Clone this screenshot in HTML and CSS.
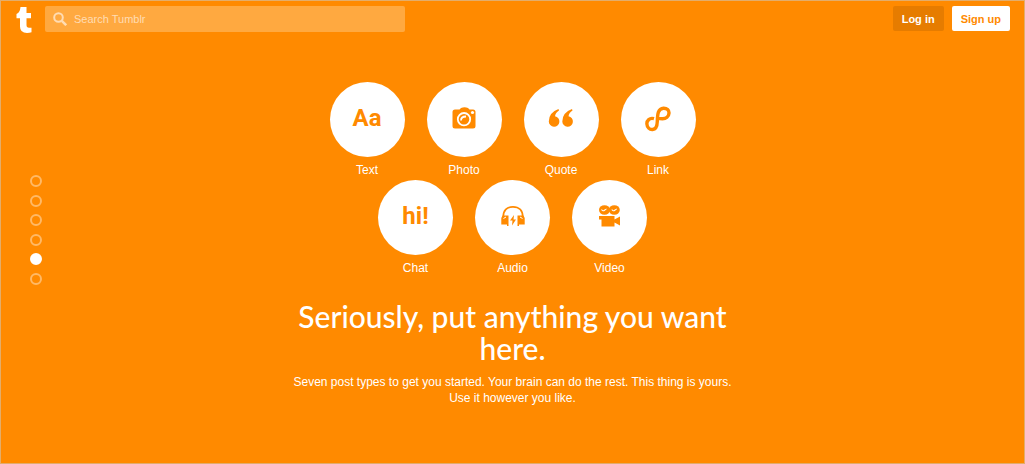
FILE: index.html
```
<!DOCTYPE html>
<html lang="en">
<head>
  <meta charset="UTF-8">
  <meta name="viewport" content="width=device-width, initial-scale=1.0">
  <title>Tumblr</title>
  <link rel="stylesheet" href="styles.css">
</head>
<body>

  <header class="header">
    <a class="logo" href="#" aria-label="Tumblr">
      <svg width="16" height="26" viewBox="0 0 16 26"><path fill="#fff" d="M4.500 0h6v6H15v5.200h-4.500V18q0 2.800 2.500 2.800h2.500v4.400Q13.500 26 11 26 4 26 4 19.500v-8.300H.5V7Q4 5.500 4.500 0z"/></svg>
    </a>
    <form class="search">
      <label for="q" aria-label="Search">
        <svg width="14" height="14" viewBox="0 0 14 14" fill="none" stroke="#ffdcb3" stroke-width="2"><circle cx="5.500" cy="5.500" r="4.300"/><path stroke-width="2.500" d="M8.800 8.800l4.400 4.400"/></svg>
      </label>
      <input id="q" type="text" placeholder="Search Tumblr">
    </form>
    <div class="buttons">
      <button class="btn login" type="button">Log in</button>
      <button class="btn signup" type="button">Sign up</button>
    </div>
  </header>

  <main class="main">
    <nav class="dots" aria-label="Sections">
      <a href="#1" aria-label="1"></a>
      <a href="#2" aria-label="2"></a>
      <a href="#3" aria-label="3"></a>
      <a href="#4" aria-label="4"></a>
      <a class="active" href="#5" aria-label="5"></a>
      <a href="#6" aria-label="6"></a>
    </nav>

    <section class="content">
      <ul class="types">
        <li>
          <span class="circle">Aa</span>
          Text
        </li>
        <li>
          <span class="circle">
            <svg width="26" height="26" viewBox="0 0 26 26">
              <path fill="#ff8a00" d="M4 3.500h4.500L10 2q3.500-1.500 7 0l1.500 1.500H22q2.500 0 2.500 2.500v14q0 2.500-2.500 2.500H4q-2.500 0-2.500-2.500V6q0-2.500 2.500-2.500z"/>
              <circle cx="13" cy="13.200" r="6.200" fill="none" stroke="#fff" stroke-width="1.800"/>
              <path fill="none" stroke="#fff" stroke-width="1.800" d="M10 14.500q0-4 5-4"/>
              <circle cx="21.500" cy="6.500" r="1.600" fill="#fff"/>
            </svg>
          </span>
          Photo
        </li>
        <li>
          <span class="circle">
            <svg width="26" height="26" viewBox="0 0 26 26" fill="#ff8a00">
              <path id="mark" d="M10.500 3l.5 1.400Q7.500 6.500 7 10.200A5.300 5.300 0 1 1 .8 15.500Q.8 6.500 10.500 3z"/>
              <use href="#mark" x="13.500"/>
            </svg>
          </span>
          Quote
        </li>
        <li>
          <span class="circle">
            <svg width="26" height="26" viewBox="0 0 26 26" fill="none" stroke="#ff8a00" stroke-width="3.400">
              <path d="M9 12.700C4.500 11.500 1.700 14.500 1.900 18S4.500 23.700 7.500 23.500c4-.3 4.700-4 4.800-8C12.500 8 13 2.500 18.500 2.200c3.500-.1 5.700 1.800 5.500 5-.2 3.500-3 5.600-6.500 5.600-2 0-3.500-.3-5-.8"/>
            </svg>
          </span>
          Link
        </li>
        <li>
          <span class="circle">hi!</span>
          Chat
        </li>
        <li>
          <span class="circle">
            <svg width="26" height="26" viewBox="0 0 26 26">
              <path fill="none" stroke="#ff8a00" stroke-width="1.700" d="M3.200 13C3.200 6.500 7 2.800 13 2.800S22.800 6.500 22.800 13"/>
              <path fill="#ff8a00" d="M2.500 11.500h6v10.500H7V20.500H1.300v-6.500zM23.500 11.500h-6v10.500H19V20.500h5.700v-6.500z"/>
              <path fill="#ff8a00" d="M14 11l-4 5.500h2.500L12 21.500l4-6h-2.500z"/>
              <path fill="none" stroke="#fff" stroke-width="1" d="M3.500 14.500l2.500-1.500M22.500 14.500l-2.500-1.500"/>
            </svg>
          </span>
          Audio
        </li>
        <li>
          <span class="circle">
            <svg width="26" height="26" viewBox="0 0 26 26">
              <g fill="#ff8a00">
                <ellipse cx="7.500" cy="6" rx="5.500" ry="4.800"/>
                <ellipse cx="17.300" cy="6" rx="5.500" ry="4.800"/>
                <path d="M2 12h15.500v3.500l5.500-3v9l-5.500-3V22.500H4.500v-7H2z"/>
              </g>
              <path fill="none" stroke="#fff" stroke-width="1.100" d="M4.500 5.500q1.500 2 3 .8t2-1.300M14.800 5.500q1.500 2 3 .8t2-1.300"/>
            </svg>
          </span>
          Video
        </li>
      </ul>
      <h1>Seriously, put anything you want here.</h1>
      <p>Seven post types to get you started. Your brain can do the rest. This thing is yours. Use it however you like.</p>
    </section>
  </main>

</body>
</html>
```
FILE: styles.css
```
* {
  box-sizing: border-box;
}
body {
  margin: 0;
  min-height: 100vh;
  display: flex;
  flex-direction: column;
  background-color: #ff8a00;
  border: 1px solid #e3ad6b;
  color: #fff;
  font-family: "Liberation Sans", Arial, sans-serif;
}
.header {
  display: flex;
  align-items: flex-start;
  padding: 5px 14px 0 15px;
}
.logo {
  margin: 1px 13px 0 0;
}
.logo svg,
.search svg {
  display: block;
}
.search {
  display: flex;
  align-items: center;
  flex: 0 1 360px;
  height: 26px;
  padding: 0 8px;
  border-radius: 2px;
  background-color: #ffa940;
}
.search input {
  flex: 1;
  min-width: 0;
  margin-left: 7px;
  padding: 0;
  border: 0;
  outline: 0;
  background: none;
  color: #fff;
  font: 11px "Liberation Sans", Arial, sans-serif;
}
.search input::placeholder {
  color: #ffdcb3;
}
.buttons {
  display: flex;
  gap: 8px;
  margin-left: auto;
}
.btn {
  height: 25px;
  padding: 0 9px;
  border: 0;
  border-radius: 2px;
  font: bold 11px "Liberation Sans", Arial, sans-serif;
}
.login {
  background-color: #e67c00;
  color: #fff;
}
.signup {
  background-color: #fff;
  color: #ff8a00;
}
.main {
  flex: 1;
  display: grid;
  grid-template-columns: 1fr minmax(0, 450px) 1fr;
}
.dots {
  display: flex;
  flex-direction: column;
  justify-content: space-between;
  height: 110px;
  margin: 142px 0 0 29px;
}
.dots a {
  width: 12px;
  height: 12px;
  border: 2px solid #ffb966;
  border-radius: 50%;
}
.dots .active {
  border-color: #fff;
  background-color: #fff;
}
.content {
  padding-top: 49px;
  text-align: center;
}
.types {
  display: flex;
  flex-wrap: wrap;
  justify-content: center;
  column-gap: 22px;
  margin: 0 auto;
  padding: 0;
  max-width: 380px;
  list-style: none;
}
.types li {
  width: 75px;
  height: 98px;
  font-size: 12px;
  line-height: 27px;
}
.circle {
  display: flex;
  align-items: center;
  justify-content: center;
  height: 75px;
  padding-bottom: 2px;
  border-radius: 50%;
  background-color: #fff;
  color: #ff8a00;
  font-family: Roboto, sans-serif;
  font-size: 24px;
  font-weight: bold;
}
h1 {
  margin: 22px 0 10px;
  font: 500 30px/32px Lato, sans-serif;
}
p {
  margin: 0;
  font-size: 12px;
  line-height: 16px;
}
```
